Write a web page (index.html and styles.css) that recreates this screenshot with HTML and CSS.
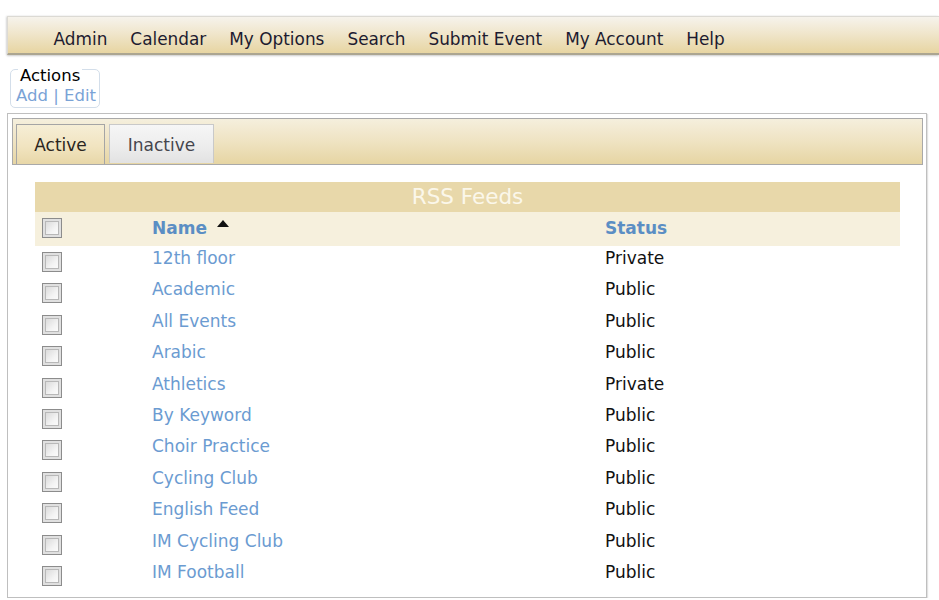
FILE: index.html
```html
<!DOCTYPE html>
<html>
<head>
<meta charset="utf-8">
<title>RSS Feeds</title>
<link rel="stylesheet" href="styles.css">
</head>
<body>
<nav class="topnav">
  <a class="nav-item">Admin</a>
  <a class="nav-item">Calendar</a>
  <a class="nav-item">My Options</a>
  <a class="nav-item">Search</a>
  <a class="nav-item">Submit Event</a>
  <a class="nav-item">My Account</a>
  <a class="nav-item">Help</a>
</nav>

<div class="actions">
  <div class="actions-title">Actions</div>
  <div class="actions-links"><a class="link">Add</a> | <a class="link">Edit</a></div>
</div>

<div class="panel">
  <div class="tabbar">
    <div class="tab tab-active">Active</div>
    <div class="tab tab-inactive">Inactive</div>
  </div>

  <table class="feeds">
    <colgroup>
      <col class="col-check">
      <col class="col-name">
      <col class="col-status">
    </colgroup>
    <thead>
      <tr class="title-row"><th colspan="3">RSS Feeds</th></tr>
      <tr class="head-row">
        <th class="cell-check"><input type="checkbox" class="cb"></th>
        <th class="cell-text"><span class="head-link">Name</span><svg class="sort" width="12" height="7" viewBox="0 0 12 7"><path d="M0 7 L6 0 L12 7 Z" fill="#111"/></svg></th>
        <th class="cell-text"><span class="head-link">Status</span></th>
      </tr>
    </thead>
    <tbody>
      <tr><td class="cell-check"><input type="checkbox" class="cb"></td><td class="cell-text"><a class="link">12th floor</a></td><td class="cell-text">Private</td></tr>
      <tr><td class="cell-check"><input type="checkbox" class="cb"></td><td class="cell-text"><a class="link">Academic</a></td><td class="cell-text">Public</td></tr>
      <tr><td class="cell-check"><input type="checkbox" class="cb"></td><td class="cell-text"><a class="link">All Events</a></td><td class="cell-text">Public</td></tr>
      <tr><td class="cell-check"><input type="checkbox" class="cb"></td><td class="cell-text"><a class="link">Arabic</a></td><td class="cell-text">Public</td></tr>
      <tr><td class="cell-check"><input type="checkbox" class="cb"></td><td class="cell-text"><a class="link">Athletics</a></td><td class="cell-text">Private</td></tr>
      <tr><td class="cell-check"><input type="checkbox" class="cb"></td><td class="cell-text"><a class="link">By Keyword</a></td><td class="cell-text">Public</td></tr>
      <tr><td class="cell-check"><input type="checkbox" class="cb"></td><td class="cell-text"><a class="link">Choir Practice</a></td><td class="cell-text">Public</td></tr>
      <tr><td class="cell-check"><input type="checkbox" class="cb"></td><td class="cell-text"><a class="link">Cycling Club</a></td><td class="cell-text">Public</td></tr>
      <tr><td class="cell-check"><input type="checkbox" class="cb"></td><td class="cell-text"><a class="link">English Feed</a></td><td class="cell-text">Public</td></tr>
      <tr><td class="cell-check"><input type="checkbox" class="cb"></td><td class="cell-text"><a class="link">IM Cycling Club</a></td><td class="cell-text">Public</td></tr>
      <tr><td class="cell-check"><input type="checkbox" class="cb"></td><td class="cell-text"><a class="link">IM Football</a></td><td class="cell-text">Public</td></tr>
    </tbody>
  </table>
</div>
</body>
</html>
```

FILE: styles.css
```css
html, body {
  margin: 0;
  padding: 0;
  background: #ffffff;
}
body {
  font-family: "DejaVu Sans", Verdana, sans-serif;
  font-size: 17px;
  color: #111111;
}

.topnav {
  margin: 16px 0 0 7px;
  height: 39px;
  box-sizing: border-box;
  padding: 12px 0 0 34px;
  display: flex;
  background: linear-gradient(to bottom, #f6f3ec 0%, #f0e6cc 45%, #e7d5a2 100%);
  border-top: 1px solid #dcdad4;
  border-left: 1px solid #dcdad4;
  border-bottom: 2px solid #aba591;
  box-shadow: 0 1px 2px rgba(0,0,0,0.18), -1px 0 2px rgba(0,0,0,0.1);
}
.nav-item {
  padding: 0 11.5px;
  line-height: 20px;
  font-size: 16.9px;
  color: #1d1b30;
}

.actions {
  margin: 14px 0 0 10px;
  width: 90px;
  height: 39px;
  box-sizing: border-box;
  border: 1px solid #d3deea;
  border-radius: 5px;
  font-size: 16.5px;
}
.actions-title {
  width: max-content;
  margin: -4px 0 0 7px;
  padding: 0 2px;
  background: #ffffff;
  line-height: 20px;
  color: #000000;
}
.actions-links {
  padding-left: 5px;
  line-height: 20px;
  color: #7aa3d6;
}
.link {
  color: #6b9bd1;
  text-decoration: none;
}
.actions-links .link {
  color: #7aa3d6;
}

.panel {
  margin: 5px 0 0 7px;
  width: 920px;
  height: 485px;
  box-sizing: border-box;
  padding: 4px;
  border: 1px solid #bfbfbf;
  box-shadow: 1px 1px 1px #e2e2e2;
}

.tabbar {
  height: 47px;
  box-sizing: border-box;
  width: 911px;
  border: 1px solid #a9a9a9;
  background: linear-gradient(to bottom, #f5efdd 0%, #efe3c2 50%, #e6d5a3 100%);
  display: flex;
  align-items: flex-end;
  padding-left: 3px;
  gap: 4px;
}
.tab {
  box-sizing: border-box;
  text-align: center;
  padding-top: 10px;
  line-height: 20px;
}
.tab-active {
  width: 89px;
  height: 40px;
  border: 1px solid #a5a5a5;
  border-bottom: none;
  background: linear-gradient(to bottom, #f6eed6 0%, #f1e4c0 55%, #e8d7a8 100%);
  color: #2a2520;
}
.tab-inactive {
  width: 105px;
  height: 39px;
  margin-bottom: 1px;
  border: 1px solid #c9c9c9;
  border-bottom: none;
  background: linear-gradient(to bottom, #f6f6f6 0%, #ececec 60%, #e2e2e2 100%);
  color: #45454d;
}

.feeds {
  margin: 17px 0 0 23px;
  width: 865px;
  border-collapse: collapse;
  table-layout: fixed;
}
.col-check { width: 117px; }
.col-name { width: 453px; }
.col-status { width: 295px; }

.title-row {
  height: 30px;
}
.title-row th {
  padding: 0;
  background: #e8d8aa;
  color: #fbf7ea;
  font-weight: normal;
  font-size: 21.5px;
  line-height: 30px;
  text-align: center;
}
.head-row {
  height: 34px;
}
.head-row th {
  padding: 0;
  background: #f6f0dd;
  text-align: left;
  vertical-align: top;
  font-weight: bold;
}
.head-row .cell-text {
  padding-top: 6px;
  line-height: 20px;
}
.head-row .cell-check {
  padding: 6px 0 0 7px;
}
.head-link {
  color: #5b8ec4;
}
.sort {
  margin-left: 10px;
  vertical-align: 7px;
}

.feeds tbody tr {
  height: 31.4px;
}
.feeds td {
  padding: 0;
  vertical-align: top;
}
.feeds tbody .cell-text {
  padding-top: 2px;
  line-height: 20px;
}
.feeds tbody .cell-check {
  padding: 6px 0 0 7px;
}

.cb {
  appearance: none;
  -webkit-appearance: none;
  display: block;
  margin: 0;
  width: 20px;
  height: 20px;
  box-sizing: border-box;
  border: 1px solid #8c8c8c;
  background: linear-gradient(135deg, #d2d2d2 0%, #f4f4f4 60%, #ffffff 100%);
  box-shadow: inset 0 0 0 2px #e0e0e0, inset 0 0 0 3px #b8b8b8;
}
```
